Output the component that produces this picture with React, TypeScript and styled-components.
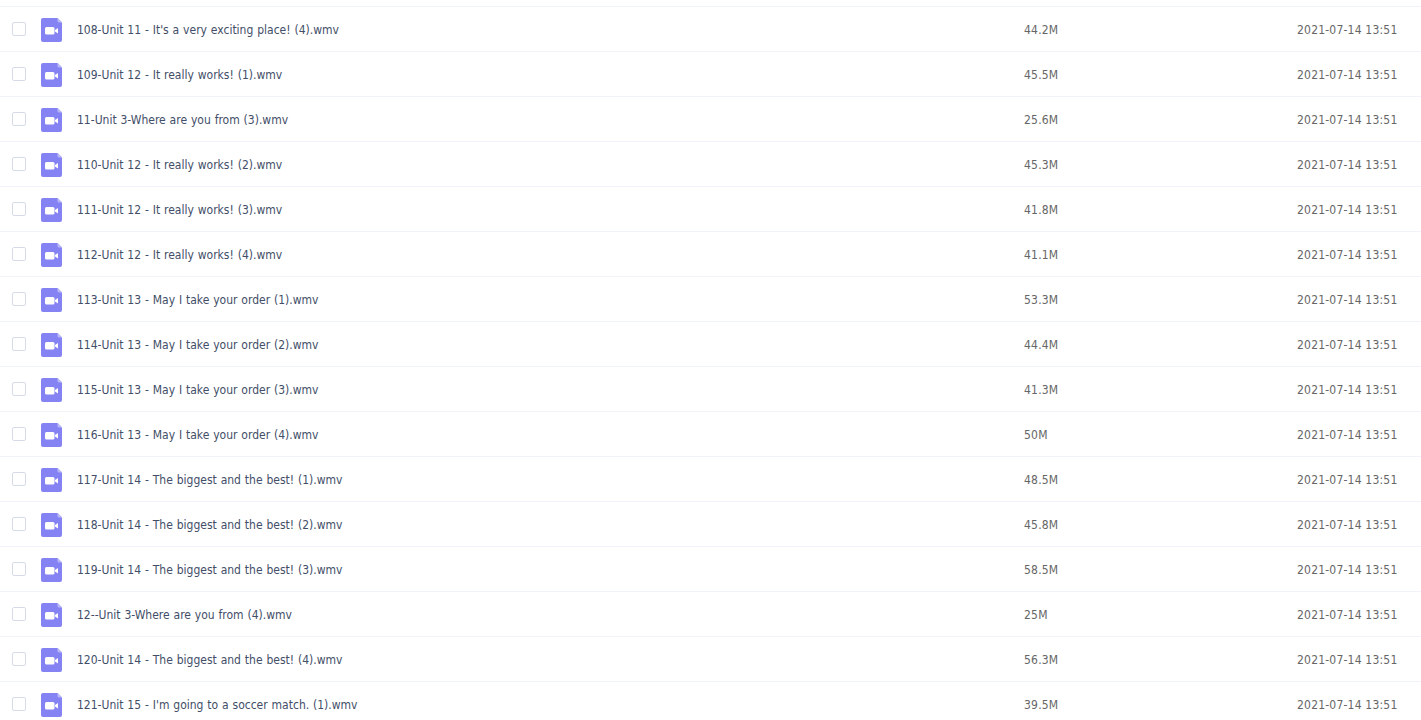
import { createGlobalStyle, styled } from "styled-components"

const GlobalStyle = createGlobalStyle`
  html, body {
    margin: 0;
    padding: 0;
    background: #fff;
    overflow: hidden;
  }
`

const List = styled.div`
  width: 1421px;
  height: 720px;
  padding-top: 6px;
  box-sizing: border-box;
  overflow: hidden;
  font-family: "DejaVu Sans Condensed", "DejaVu Sans", sans-serif;
  font-stretch: condensed;
  font-size: 12px;
`

const Row = styled.div`
  display: grid;
  grid-template-columns: 29px 36px 947px 273px 1fr;
  align-items: center;
  height: 45px;
  box-sizing: border-box;
  border-top: 1px solid #f0f4fa;
  padding-left: 12px;
  color: #424e67;
`

const Check = styled.span`
  display: block;
  width: 14px;
  height: 14px;
  box-sizing: border-box;
  border: 1px solid #d6dce7;
  border-radius: 2px;
  background: #fff;
`

const Name = styled.span`
  padding-top: 2px;
  white-space: nowrap;
  word-spacing: 0.45px;
`

const Meta = styled.span`
  padding-top: 2px;
  color: #666;
  white-space: nowrap;
  letter-spacing: 0.2px;
`

const IconSvg = styled.svg`
  display: block;
  margin-top: 2px;
`

const VideoIcon = () => (
  <IconSvg width="21" height="24" viewBox="0 0 21 24">
    <path d="M2 0h14.5L21 4.5V22a2 2 0 0 1-2 2H2a2 2 0 0 1-2-2V2a2 2 0 0 1 2-2z" fill="#8583f3" />
    <path d="M16.5 0L21 4.5h-3a1.5 1.5 0 0 1-1.5-1.5z" fill="#b9b8f8" />
    <rect x="4" y="9" width="9.5" height="7.5" rx="1.5" fill="#fff" />
    <path d="M14 12l3-2v5.5L14 13.5z" fill="#fff" />
  </IconSvg>
)

const files = [
  ["108-Unit 11 - It's a very exciting place! (4).wmv", "44.2M"],
  ["109-Unit 12 - It really works! (1).wmv", "45.5M"],
  ["11-Unit 3-Where are you from (3).wmv", "25.6M"],
  ["110-Unit 12 - It really works! (2).wmv", "45.3M"],
  ["111-Unit 12 - It really works! (3).wmv", "41.8M"],
  ["112-Unit 12 - It really works! (4).wmv", "41.1M"],
  ["113-Unit 13 - May I take your order (1).wmv", "53.3M"],
  ["114-Unit 13 - May I take your order (2).wmv", "44.4M"],
  ["115-Unit 13 - May I take your order (3).wmv", "41.3M"],
  ["116-Unit 13 - May I take your order (4).wmv", "50M"],
  ["117-Unit 14 - The biggest and the best! (1).wmv", "48.5M"],
  ["118-Unit 14 - The biggest and the best! (2).wmv", "45.8M"],
  ["119-Unit 14 - The biggest and the best! (3).wmv", "58.5M"],
  ["12--Unit 3-Where are you from (4).wmv", "25M"],
  ["120-Unit 14 - The biggest and the best! (4).wmv", "56.3M"],
  ["121-Unit 15 - I'm going to a soccer match. (1).wmv", "39.5M"],
]

function App() {
  return (
    <>
      <GlobalStyle />
      <List>
        {files.map(([name, size]) => (
          <Row key={name}>
            <Check />
            <VideoIcon />
            <Name>{name}</Name>
            <Meta>{size}</Meta>
            <Meta>2021-07-14 13:51</Meta>
          </Row>
        ))}
      </List>
    </>
  )
}

export default App
